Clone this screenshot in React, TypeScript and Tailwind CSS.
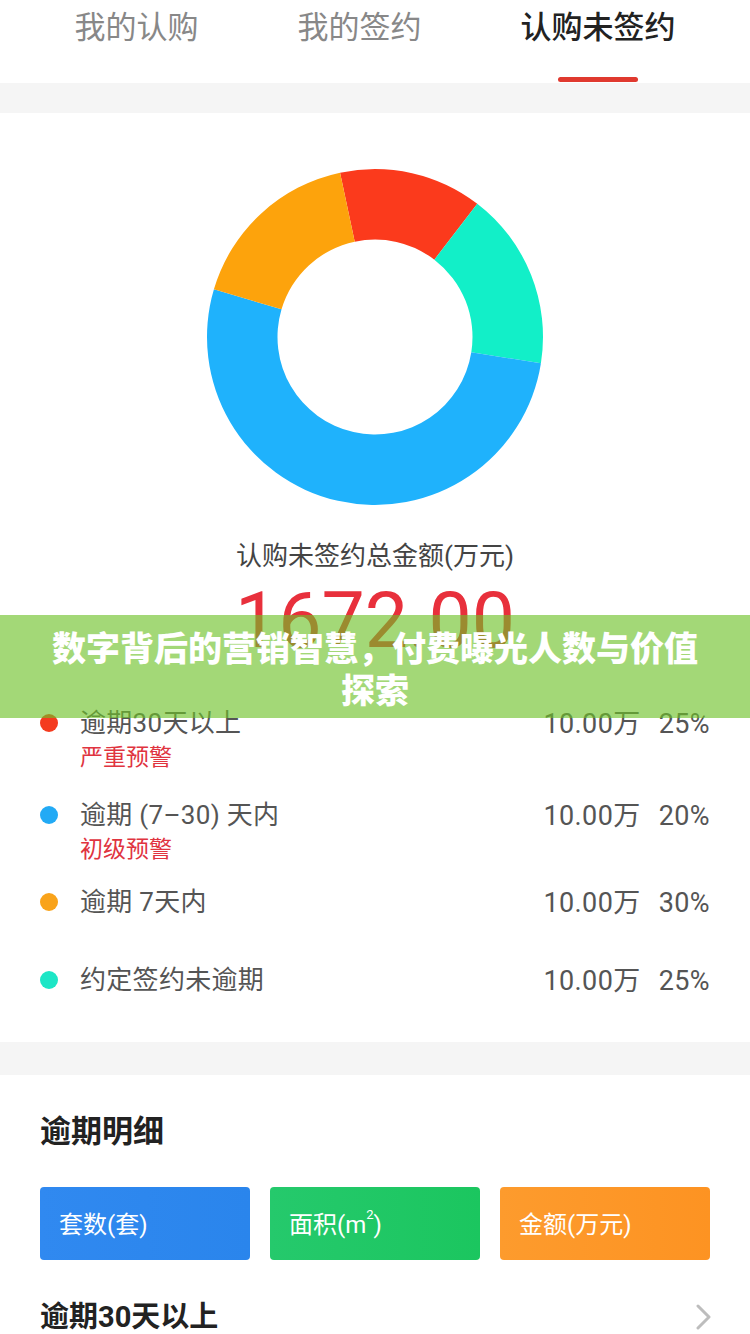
import React from "react";

const CX = 170;
const CY = 170;
const RO = 168;
const RI = 97.5;

function pt(r: number, deg: number) {
  const a = (deg * Math.PI) / 180;
  return [CX + r * Math.sin(a), CY - r * Math.cos(a)];
}

function seg(a0: number, a1: number) {
  const large = a1 - a0 > 180 ? 1 : 0;
  const [x0, y0] = pt(RO, a0);
  const [x1, y1] = pt(RO, a1);
  const [x2, y2] = pt(RI, a1);
  const [x3, y3] = pt(RI, a0);
  return `M ${x0} ${y0} A ${RO} ${RO} 0 ${large} 1 ${x1} ${y1} L ${x2} ${y2} A ${RI} ${RI} 0 ${large} 0 ${x3} ${y3} Z`;
}

const segments = [
  { a0: -12, a1: 37.5, color: "#fb3a1c" },
  { a0: 37.5, a1: 99, color: "#12efc8" },
  { a0: 99, a1: 286.5, color: "#1fb2fc" },
  { a0: 286.5, a1: 348, color: "#fda30c" },
];

function Donut() {
  return (
    <svg width="340" height="340" viewBox="0 0 340 340">
      {segments.map((s, i) => (
        <path key={i} d={seg(s.a0, s.a1)} fill={s.color} />
      ))}
    </svg>
  );
}

type Row = {
  dot: string;
  label: string;
  sub?: string;
  value: string;
  pct: string;
  mt: string;
};

function LegendRow({ dot, label, sub, value, pct, mt }: Row) {
  return (
    <div className={`flex items-start pl-[40px] pr-[40px] ${mt}`}>
      <div className="w-[18px] h-[18px] rounded-full mt-[9px] shrink-0" style={{ backgroundColor: dot }} />
      <div className="ml-[22px] flex-1 flex flex-col">
        <div className="text-[26px] leading-[36px] text-[#555555] tracking-[0.3px]">{label}</div>
        {sub && <div className="text-[23px] leading-[34px] text-[#e0343f]">{sub}</div>}
      </div>
      <div className="flex gap-[18px] text-[27px] leading-[36px] text-[#555555] mt-[1px] tracking-[0.4px]">
        <span>{value}</span>
        <span>{pct}</span>
      </div>
    </div>
  );
}

export default function App() {
  return (
    <div className="relative w-[750px] min-h-[1334px] bg-white overflow-hidden font-['Roboto','Noto_Sans_CJK_SC',sans-serif]">
      {/* Tabs */}
      <div className="h-[83px] flex justify-center gap-[99px]">
        <div className="flex flex-col items-center">
          <div className="mt-[8px] text-[31px] leading-[40px] text-[#888888]">我的认购</div>
        </div>
        <div className="flex flex-col items-center">
          <div className="mt-[8px] text-[31px] leading-[40px] text-[#888888]">我的签约</div>
        </div>
        <div className="flex flex-col items-center">
          <div className="mt-[8px] text-[31px] leading-[40px] text-[#222222] font-medium">认购未签约</div>
          <div className="mt-[29px] w-[80px] h-[5px] rounded-full bg-[#e0392f]" />
        </div>
      </div>
      <div className="h-[30px] bg-[#f5f5f5]" />

      {/* Chart */}
      <div className="flex flex-col items-center">
        <div className="mt-[54px]">
          <Donut />
        </div>
        <div className="mt-[31px] text-[26px] leading-[36px] text-[#444444]">认购未签约总金额(万元)</div>
        <div className="mt-[7px] text-[77px] leading-[80px] text-[#e8303c]">1672.00</div>
      </div>

      {/* Legend */}
      <div className="mt-[44px] pb-[43px]">
        <LegendRow dot="#f43b1f" label="逾期30天以上" sub="严重预警" value="10.00万" pct="25%" mt="mt-0" />
        <LegendRow dot="#22aaf5" label="逾期 (7–30) 天内" sub="初级预警" value="10.00万" pct="20%" mt="mt-[22px]" />
        <LegendRow dot="#f9a31a" label="逾期 7天内" value="10.00万" pct="30%" mt="mt-[17px]" />
        <LegendRow dot="#1de6c6" label="约定签约未逾期" value="10.00万" pct="25%" mt="mt-[41px]" />
      </div>
      <div className="h-[33px] bg-[#f5f5f5]" />

      {/* Detail */}
      <div className="px-[40px]">
        <div className="mt-[37px] text-[31px] leading-[40px] font-bold text-[#222222]">逾期明细</div>
        <div className="mt-[35px] grid grid-cols-3 gap-[20px]">
          <div className="h-[73px] rounded-[4px] bg-gradient-to-r from-[#3089f0] to-[#2a85ec] flex items-center pl-[19px] pt-[3px] text-[24px] text-white">
            套数(套)
          </div>
          <div className="h-[73px] rounded-[4px] bg-gradient-to-r from-[#25c96c] to-[#1bc65f] flex items-center pl-[19px] pt-[3px] text-[24px] text-white">
            面积(m<sup className="text-[13px] -top-[10px] relative">2</sup>)
          </div>
          <div className="h-[73px] rounded-[4px] bg-gradient-to-r from-[#fd9b2d] to-[#fd9322] flex items-center pl-[19px] pt-[3px] text-[24px] text-white">
            金额(万元)
          </div>
        </div>
        <div className="mt-[37px] flex items-center justify-between">
          <div className="text-[29px] leading-[40px] font-bold text-[#222222]">逾期30天以上</div>
          <svg width="16" height="26" viewBox="0 0 16 26" className="mr-[-1px]">
            <polyline points="3,2 14,13 3,24" fill="none" stroke="#bdbdbd" strokeWidth="3" strokeLinecap="round" strokeLinejoin="round" />
          </svg>
        </div>
      </div>

      {/* Overlay banner */}
      <div className="absolute left-0 top-[615px] w-[750px] h-[103px] bg-[rgba(109,194,40,0.63)] flex items-center justify-center px-[50px] pt-[3px]">
        <div className="text-center text-white text-[34px] leading-[42px] font-black font-['Noto_Sans_CJK_SC',sans-serif]">
          数字背后的营销智慧，付费曝光人数与价值探索
        </div>
      </div>
    </div>
  );
}
